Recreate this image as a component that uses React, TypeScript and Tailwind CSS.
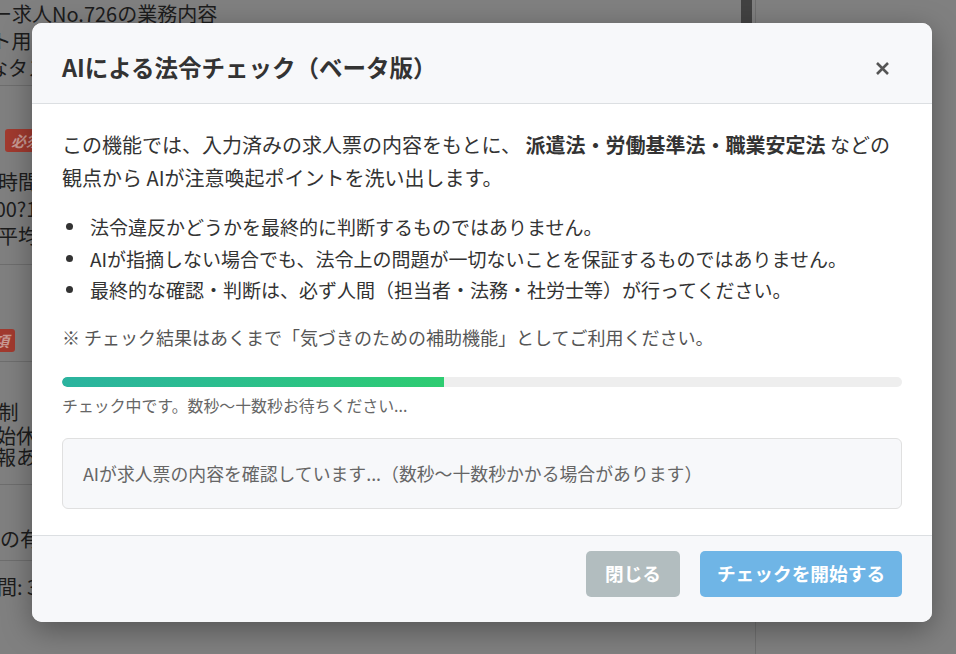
import React from 'react';

const FONT = "font-[family-name:'Noto_Sans_CJK_JP','Noto_Sans',sans-serif]";

function BgLine({ text, shift, className = '' }: { text: string; shift: number; className?: string }) {
  return (
    <div className={`h-[27px] whitespace-nowrap text-[20px] leading-[27px] text-[#1c1c1c] ${className}`}>
      <span className="inline-block" style={{ marginLeft: `${shift}px` }}>
        {text}
      </span>
    </div>
  );
}

function Badge({ text, shift }: { text: string; shift: number }) {
  return (
    <div className="flex h-[23px]">
      <span
        className="inline-flex items-center rounded-[3px] bg-[#a23a2f] px-[6px] text-[15px] font-bold italic leading-[23px] text-[#c99a94]"
        style={{ marginLeft: `${shift}px` }}
      >
        {text}
      </span>
    </div>
  );
}

function BackgroundPage() {
  return (
    <div className="flex h-[654px] w-[956px] overflow-hidden bg-[#808080]">
      <div className="relative w-[756px] border-r border-[#707070]">
        <div className="flex flex-col">
          <div className="h-[86px] border-b border-[#6e6e6e]">
            <BgLine text="【メンバー求人No.726の業務内容" shift={-88} />
            <BgLine text="・リクルート用テキスト" shift={-108} />
            <BgLine text="・主なタスク" shift={-52} />
          </div>
          <div className="h-[179px] border-b border-[#6e6e6e] pt-[43px]">
            <Badge text="必須" shift={5} />
            <div className="pt-[16px]">
              <BgLine text="【勤務時間】" shift={-62} />
              <BgLine text="9:00?18:00" shift={-22} />
              <BgLine text="月平均" shift={-22} />
            </div>
          </div>
          <div className="h-[97px] border-b border-[#6e6e6e] pt-[64px]">
            <Badge text="任意事項" shift={-57} />
          </div>
          <div className="h-[123px] border-b border-[#6e6e6e] pt-[36px]">
            <BgLine text="フレックス制（" shift={-101} />
            <BgLine text="開始休憩" shift={-24} className="-mt-[3px]" />
            <BgLine text="情報あり" shift={-24} className="-mt-[6px]" />
          </div>
          <div className="h-[76px] border-b border-[#6e6e6e] pt-[40px]">
            <BgLine text="残業の有無" shift={-40} />
          </div>
          <div className="pt-[12px]">
            <BgLine text="試用期間: 3ヶ月" shift={-63} />
          </div>
        </div>
        <div className="absolute right-[3px] top-0 h-[23px] w-[11px] bg-[#424242]" />
      </div>
    </div>
  );
}

function CloseIcon() {
  return (
    <svg width="13" height="13" viewBox="0 0 13 13" aria-hidden="true">
      <path d="M1 1 L12 12 M12 1 L1 12" stroke="#555" strokeWidth="2.6" strokeLinecap="butt" />
    </svg>
  );
}

function Bullet({ children }: { children: React.ReactNode }) {
  return (
    <li className="flex items-center">
      <span className="ml-[4px] mr-[17px] h-[7px] w-[7px] shrink-0 rounded-full bg-[#333]" />
      <span>{children}</span>
    </li>
  );
}

function LegalCheckModal() {
  const progress = 45.5;
  return (
    <div className="absolute left-[32px] top-[23px] flex w-[900px] flex-col overflow-hidden rounded-[10px] bg-white shadow-[0_8px_30px_rgba(0,0,0,0.35)]">
      <div className="flex h-[81px] items-center justify-between border-b border-[#dcdfe2] bg-[#f7f8fa] pl-[30px] pr-[38px] pt-[10px]">
        <h2 className="text-[23.5px] font-bold leading-none text-[#333]">AIによる法令チェック（ベータ版）</h2>
        <button className="flex h-[24px] w-[24px] items-center justify-center" aria-label="閉じる">
          <CloseIcon />
        </button>
      </div>

      <div className="flex flex-col px-[30px] pb-[26px] pt-[24px]">
        <p className="text-[20px] leading-[33px] text-[#333]">
          この機能では、入力済みの求人票の内容をもとに、 <strong className="font-bold">派遣法・労働基準法・職業安定法</strong> などの
          <br />
          観点から AIが注意喚起ポイントを洗い出します。
        </p>

        <ul className="mt-[17px] flex flex-col text-[19px] leading-[31.5px] text-[#333]">
          <Bullet>法令違反かどうかを最終的に判断するものではありません。</Bullet>
          <Bullet>AIが指摘しない場合でも、法令上の問題が一切ないことを保証するものではありません。</Bullet>
          <Bullet>最終的な確認・判断は、必ず人間（担当者・法務・社労士等）が行ってください。</Bullet>
        </ul>

        <p className="mt-[17px] text-[18px] leading-[28px] text-[#555]">
          ※ チェック結果はあくまで「気づきのための補助機能」としてご利用ください。
        </p>

        <div className="mt-[26px] h-[10px] w-full overflow-hidden rounded-full bg-[#eeeeee]">
          <div
            className="h-full rounded-l-full bg-gradient-to-r from-[#2bb39f] to-[#2ecc71]"
            style={{ width: `${progress}%` }}
          />
        </div>
        <p className="mt-[8px] text-[15.9px] leading-[22px] text-[#666]">チェック中です。数秒〜十数秒お待ちください...</p>

        <div className="mt-[21px] flex h-[71px] items-center rounded-[6px] border border-[#e0e0e0] bg-[#f7f8fa] px-[20px] text-[17.85px] text-[#666]">
          AIが求人票の内容を確認しています...（数秒〜十数秒かかる場合があります）
        </div>
      </div>

      <div className="flex justify-end gap-[20px] border-t border-[#dcdfe2] bg-[#f7f8fa] px-[30px] pb-[25px] pt-[15px]">
        <button className="flex h-[46px] w-[94px] items-center justify-center rounded-[5px] bg-[#b2bdbf] text-[18.7px] font-bold text-white">
          閉じる
        </button>
        <button className="flex h-[46px] w-[202px] items-center justify-center rounded-[5px] bg-[#6fb5e6] text-[18.7px] font-bold text-white">
          チェックを開始する
        </button>
      </div>
    </div>
  );
}

export default function App() {
  return (
    <div className={`relative h-[654px] w-[956px] overflow-hidden ${FONT}`}>
      <BackgroundPage />
      <LegalCheckModal />
    </div>
  );
}
